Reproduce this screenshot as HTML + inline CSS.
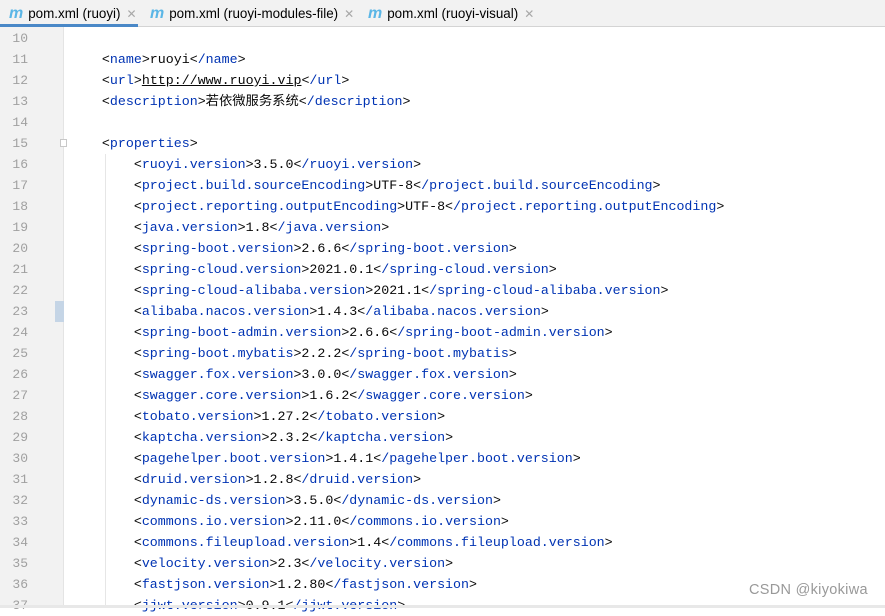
<!DOCTYPE html>
<html><head><meta charset="utf-8"><style>
body{margin:0;width:885px;height:608px;overflow:hidden;background:#fff;position:relative;font-family:"Liberation Sans","Noto Sans CJK SC",sans-serif}
.tabs{position:absolute;left:0;top:0;width:885px;height:27px;background:#f2f2f2;border-bottom:1px solid #d4d4d4;box-sizing:border-box;font-size:13.4px;color:#000}
.tab{position:absolute;top:0;height:27px;line-height:28px}
.m{color:#5bb6e6;font-style:italic;font-weight:bold;font-size:16px;margin-right:5px;font-family:"Liberation Sans",sans-serif}
.x{color:#a8a8a8;margin-left:6px;font-size:12px}
.act{border-bottom:3px solid #4a88c7;box-sizing:border-box}
.gut{position:absolute;left:0;top:27px;width:63px;height:578px;background:#f2f2f2;border-right:1px solid #e4e4e4}
.ln{position:absolute;left:0;width:28px;text-align:right;font-family:"Liberation Mono",monospace;font-size:13px;color:#a0a0a0;height:21px;line-height:21px}
.code{position:absolute;left:70px;font-family:"Liberation Mono","Noto Sans CJK SC",monospace;font-size:13.3px;white-space:pre;height:21px;line-height:21px;color:#080808}
.t{color:#0033b3}
.bot{position:absolute;left:0;top:605px;width:885px;height:3px;background:#e8e8e8}
.guide{position:absolute;left:105px;top:154px;width:1px;height:451px;background:#e6e6e6}
</style></head><body>
<div class="tabs">
<div class="tab act" style="left:0;width:138px;padding-left:9px;box-sizing:border-box"><span class="m">m</span>pom.xml (ruoyi)<span class="x">✕</span></div>
<div class="tab" style="left:150px"><span class="m">m</span>pom.xml (ruoyi-modules-file)<span class="x">✕</span></div>
<div class="tab" style="left:368px"><span class="m">m</span>pom.xml (ruoyi-visual)<span class="x">✕</span></div>
</div>
<div class="gut"></div>
<div style="position:absolute;left:55px;top:301px;width:9px;height:21px;background:#c5d5e6"></div>
<div style="position:absolute;left:60px;top:139px;width:7px;height:8px;border:1px solid #c8c8c8;background:#fff;box-sizing:border-box"></div>
<div class="guide"></div>
<div id="c"></div>
<div class="bot"></div>
<div style="position:absolute;left:749px;top:582px;font-size:14.5px;letter-spacing:0.3px;color:#999">CSDN @kiyokiwa</div>
<script>
var L=[
"","    <N>name</N>ruoyi<N>/name</N>","    <N>url</N><u>http://www.ruoyi.vip</u><N>/url</N>","    <N>description</N>若依微服务系统<N>/description</N>","",
"    <N>properties</N>",
["ruoyi.version","3.5.0"],["project.build.sourceEncoding","UTF-8"],["project.reporting.outputEncoding","UTF-8"],["java.version","1.8"],["spring-boot.version","2.6.6"],["spring-cloud.version","2021.0.1"],["spring-cloud-alibaba.version","2021.1"],["alibaba.nacos.version","1.4.3"],["spring-boot-admin.version","2.6.6"],["spring-boot.mybatis","2.2.2"],["swagger.fox.version","3.0.0"],["swagger.core.version","1.6.2"],["tobato.version","1.27.2"],["kaptcha.version","2.3.2"],["pagehelper.boot.version","1.4.1"],["druid.version","1.2.8"],["dynamic-ds.version","3.5.0"],["commons.io.version","2.11.0"],["commons.fileupload.version","1.4"],["velocity.version","2.3"],["fastjson.version","1.2.80"],["jjwt.version","0.9.1"]];
var h="";
for(var i=0;i<L.length;i++){var n=10+i,y=28+21*i;
h+='<div class="ln" style="top:'+y+'px">'+n+'</div>';
var s=L[i];
if(typeof s!="string"){s='        &lt;<span class="t">'+s[0]+'</span>&gt;'+s[1]+'&lt;<span class="t">/'+s[0]+'</span>&gt;';}
else s=s.replace(/<N>(.*?)<\/N>/g,'&lt;<span class="t">$1</span>&gt;');
h+='<div class="code" style="top:'+y+'px">'+s+'</div>';}
document.getElementById("c").innerHTML=h;
</script>
</body></html>
